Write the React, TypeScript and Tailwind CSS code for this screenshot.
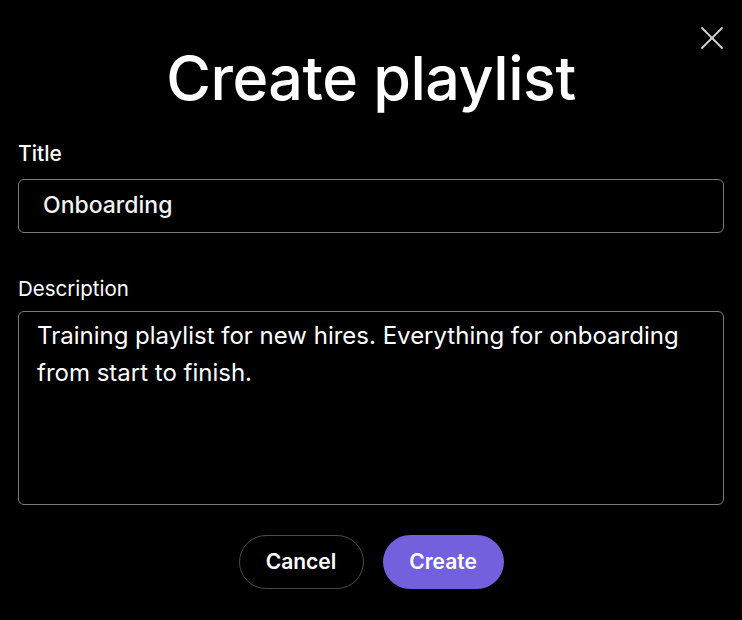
import { X } from 'lucide-react'

export default function App() {
  return (
    <div className="relative h-[620px] w-[742px] overflow-hidden bg-black px-[18px] font-['Inter',sans-serif] text-white">
      <button className="absolute right-[10px] top-[18px] text-[#d0d0d0]" aria-label="Close">
        <X size={40} strokeWidth={1.1} />
      </button>

      <h2 className="pt-[38px] text-center text-[61px] font-medium leading-[80px] tracking-[-0.5px]">
        Create playlist
      </h2>

      <label className="mt-[24px] block text-[21px] font-medium leading-[24px]">Title</label>
      <div className="mt-[13px] flex h-[54px] items-center rounded-[6px] border border-[#7a7a7a] px-[24px] pb-[2px] text-[23px] font-medium text-[#f2f2f2]">
        Onboarding
      </div>

      <label className="mt-[44px] block text-[20.5px] leading-[24px]">Description</label>
      <div className="mt-[10px] h-[194px] rounded-[6px] border border-[#7a7a7a] px-[18px] pt-[5px] text-[24px] leading-[37px]">
        Training playlist for new hires. Everything for onboarding from start to finish.
      </div>

      <div className="mt-[30px] flex justify-center gap-[19px]">
        <button className="h-[54px] w-[125px] rounded-full border border-[#4a4a4a] text-[21px] font-semibold">
          Cancel
        </button>
        <button className="h-[54px] w-[121px] rounded-full bg-[#7360dc] text-[21px] font-semibold">
          Create
        </button>
      </div>
    </div>
  )
}
